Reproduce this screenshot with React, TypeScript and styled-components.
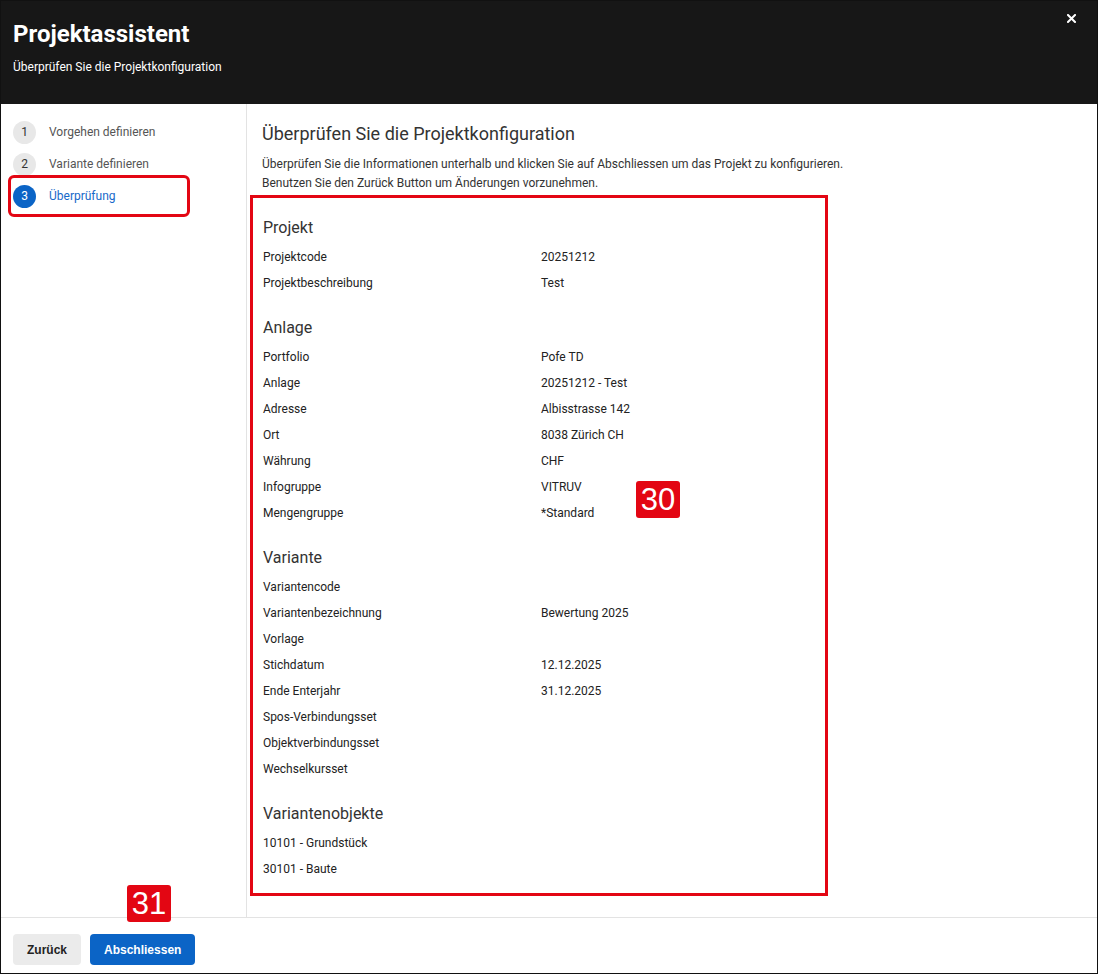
import React from "react";
import styled, { createGlobalStyle } from "styled-components";

const Global = createGlobalStyle`
  html, body { margin: 0; padding: 0; background: #fff; }
  body { font-family: Roboto, "Noto Sans", sans-serif; }
  * { box-sizing: border-box; }
`;

const Window = styled.div`
  position: relative;
  width: 1098px;
  height: 974px;
  border: 1px solid #111;
  display: flex;
  flex-direction: column;
  background: #fff;
  overflow: hidden;
`;

const Header = styled.header`
  position: relative;
  height: 103px;
  flex: none;
  background: #171717;
  color: #fff;
  padding: 19px 12px 0;
`;

const Title = styled.h1`
  margin: 0;
  font-size: 24px;
  line-height: 29px;
  font-weight: 700;
  letter-spacing: 0;
`;

const Subtitle = styled.div`
  margin-top: 10px;
  font-size: 12px;
  line-height: 16px;
`;

const Close = styled.button`
  position: absolute;
  top: 11px;
  right: 20px;
  width: 12px;
  height: 12px;
  padding: 0;
  border: none;
  background: transparent;
  display: flex;
  align-items: center;
  justify-content: center;
  cursor: pointer;
`;

const Body = styled.div`
  flex: 1;
  display: flex;
  min-height: 0;
`;

const Sidebar = styled.nav`
  width: 246px;
  flex: none;
  border-right: 1px solid #e3e3e3;
  padding: 17px 0 0 12px;
  display: flex;
  flex-direction: column;
  gap: 10px;
`;

const Step = styled.div<{ $active?: boolean }>`
  position: relative;
  display: flex;
  align-items: center;
  gap: 13px;
  height: 22px;
  font-size: 12px;
  color: ${(p) => (p.$active ? "#1769c9" : "#555")};
`;

const StepNum = styled.span<{ $active?: boolean }>`
  width: 23px;
  height: 23px;
  border-radius: 50%;
  flex: none;
  display: flex;
  align-items: center;
  justify-content: center;
  font-size: 12px;
  background: ${(p) => (p.$active ? "#0b64c6" : "#e8e8e8")};
  color: ${(p) => (p.$active ? "#fff" : "#333")};
`;

const Highlight = styled.span`
  position: absolute;
  left: -5px;
  top: -10px;
  width: 182px;
  height: 42px;
  border: 3px solid #e30613;
  border-radius: 6px;
`;

const Main = styled.main`
  flex: 1;
  padding: 18px 16px 0 15px;
  min-width: 0;
`;

const Heading = styled.h2`
  margin: 0;
  font-size: 18px;
  line-height: 24px;
  font-weight: 400;
  color: #333;
`;

const Description = styled.p`
  margin: 9px 0 0;
  font-size: 12px;
  line-height: 19px;
  color: #333;
`;

const Summary = styled.section`
  margin: 2px 0 0 -12px;
  width: 578px;
  border: 3px solid #e30613;
  padding: 20px 10px 11px;
  display: flex;
  flex-direction: column;
`;

const SectionTitle = styled.h3<{ $first?: boolean }>`
  margin: ${(p) => (p.$first ? "0" : "22px")} 0 6px;
  font-size: 16px;
  line-height: 20px;
  font-weight: 400;
  color: #333;
`;

const Row = styled.div`
  display: grid;
  grid-template-columns: 278px 1fr;
  height: 26px;
  align-items: center;
  font-size: 12px;
  color: #222;
`;

const Footer = styled.footer`
  height: 56px;
  flex: none;
  border-top: 1px solid #e3e3e3;
  padding: 16px 12px 0;
  display: flex;
  gap: 9px;
  align-items: flex-start;
`;

const Button = styled.button<{ $primary?: boolean }>`
  height: 31px;
  padding: 0 14px;
  border: none;
  border-radius: 4px;
  font-family: "Liberation Sans", Arial, sans-serif;
  font-weight: 700;
  font-size: 12px;
  background: ${(p) => (p.$primary ? "#0b64c6" : "#ebebeb")};
  color: ${(p) => (p.$primary ? "#fff" : "#222")};
  cursor: pointer;
`;

const Badge = styled.div<{ $x: number; $y: number }>`
  position: absolute;
  left: ${(p) => p.$x}px;
  top: ${(p) => p.$y}px;
  width: 44px;
  height: 37px;
  border-radius: 3px;
  background: #e30613;
  color: #fff;
  font-family: "Liberation Sans", Arial, sans-serif;
  font-size: 31px;
  line-height: 37px;
  text-align: center;
`;

type Item = [string, string];
const sections: { title: string; rows: Item[] }[] = [
  {
    title: "Projekt",
    rows: [
      ["Projektcode", "20251212"],
      ["Projektbeschreibung", "Test"],
    ],
  },
  {
    title: "Anlage",
    rows: [
      ["Portfolio", "Pofe TD"],
      ["Anlage", "20251212 - Test"],
      ["Adresse", "Albisstrasse 142"],
      ["Ort", "8038 Zürich CH"],
      ["Währung", "CHF"],
      ["Infogruppe", "VITRUV"],
      ["Mengengruppe", "*Standard"],
    ],
  },
  {
    title: "Variante",
    rows: [
      ["Variantencode", ""],
      ["Variantenbezeichnung", "Bewertung 2025"],
      ["Vorlage", ""],
      ["Stichdatum", "12.12.2025"],
      ["Ende Enterjahr", "31.12.2025"],
      ["Spos-Verbindungsset", ""],
      ["Objektverbindungsset", ""],
      ["Wechselkursset", ""],
    ],
  },
  {
    title: "Variantenobjekte",
    rows: [
      ["10101 - Grundstück", ""],
      ["30101 - Baute", ""],
    ],
  },
];

export default function App() {
  return (
    <>
      <Global />
      <Window>
        <Header>
          <Title>Projektassistent</Title>
          <Subtitle>Überprüfen Sie die Projektkonfiguration</Subtitle>
          <Close aria-label="Schliessen">
            <svg width="9" height="9" viewBox="0 0 9 9">
              <path d="M1 1 L8 8 M8 1 L1 8" stroke="#fff" strokeWidth="2" strokeLinecap="square" />
            </svg>
          </Close>
        </Header>
        <Body>
          <Sidebar>
            <Step>
              <StepNum>1</StepNum>Vorgehen definieren
            </Step>
            <Step>
              <StepNum>2</StepNum>Variante definieren
            </Step>
            <Step $active>
              <Highlight />
              <StepNum $active>3</StepNum>Überprüfung
            </Step>
          </Sidebar>
          <Main>
            <Heading>Überprüfen Sie die Projektkonfiguration</Heading>
            <Description>
              Überprüfen Sie die Informationen unterhalb und klicken Sie auf Abschliessen um das Projekt zu konfigurieren.
              <br />
              Benutzen Sie den Zurück Button um Änderungen vorzunehmen.
            </Description>
            <Summary>
              {sections.map((s, i) => (
                <React.Fragment key={s.title}>
                  <SectionTitle $first={i === 0}>{s.title}</SectionTitle>
                  {s.rows.map(([k, v]) => (
                    <Row key={k}>
                      <span>{k}</span>
                      <span>{v}</span>
                    </Row>
                  ))}
                </React.Fragment>
              ))}
            </Summary>
          </Main>
        </Body>
        <Footer>
          <Button>Zurück</Button>
          <Button $primary>Abschliessen</Button>
        </Footer>
        <Badge $x={635} $y={480}>30</Badge>
        <Badge $x={126} $y={884}>31</Badge>
      </Window>
    </>
  );
}
